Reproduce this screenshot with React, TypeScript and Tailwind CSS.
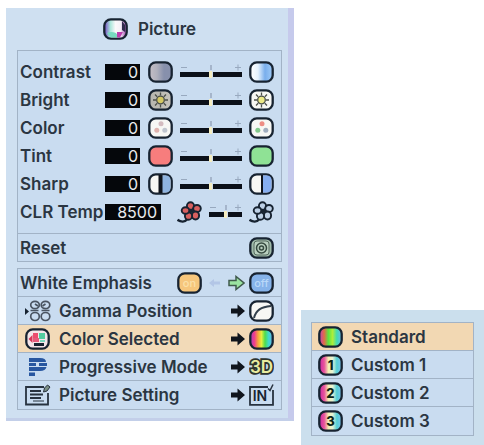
import { useState } from "react";
import type { ReactNode } from "react";

const INK = "#172331";

const rainbow = ["#b93bb4", "#f0408c", "#f6a33e", "#e4ee3e", "#4fdc4c", "#3fd9c8", "#62b8ec"];

// Rounded screen outline shared by most of the icons
const Screen = ({
  id,
  stops = ["#f7f7f4"],
  children,
}: {
  id: string;
  stops?: string[];
  children?: ReactNode;
}) => (
  <svg viewBox="0 0 25 22" className="h-[22px] w-[25px] shrink-0" aria-hidden="true">
    <defs>
      <linearGradient id={id} gradientUnits="userSpaceOnUse" x1="2" x2="23" y1="0" y2="0">
        {stops.map((color, index) => (
          <stop
            key={index}
            offset={stops.length > 1 ? index / (stops.length - 1) : 0}
            stopColor={color}
          />
        ))}
      </linearGradient>
    </defs>
    <rect
      x="1.3"
      y="1.3"
      width="22.4"
      height="19.4"
      rx="6.5"
      fill={`url(#${id})`}
      stroke={INK}
      strokeWidth="2.3"
    />
    {children}
  </svg>
);

const Sun = ({ color }: { color: string }) => (
  <g stroke="#4c5049" strokeWidth="1.3">
    <path d="M12.5 3.5v3M12.5 15.5v3M5 11h3M17 11h3M7 5.5l2.2 2.2M15.8 14.3l2.2 2.2M18 5.5l-2.2 2.2M9.2 14.3L7 16.5" />
    <circle cx="12.5" cy="11" r="3.8" fill={color} />
  </g>
);

const Dots = ({ colors }: { colors: string[] }) => (
  <g>
    <circle cx="13" cy="6.8" r="2.5" fill={colors[0]} />
    <circle cx="8.8" cy="13.2" r="2.5" fill={colors[1]} />
    <circle cx="16.8" cy="13.2" r="2.5" fill={colors[2]} />
  </g>
);

const Flower = ({ color }: { color: string }) => (
  <svg viewBox="0 0 25 22" className="h-[22px] w-[25px] shrink-0" aria-hidden="true">
    <g stroke={INK} strokeWidth="1.9" fill={color}>
      <ellipse cx="13.500" cy="5" rx="3.600" ry="3.800" />
      <ellipse cx="20" cy="7.500" rx="3.800" ry="3.500" />
      <ellipse cx="18.500" cy="14.500" rx="3.600" ry="4" />
      <ellipse cx="11.500" cy="15" rx="3.600" ry="3.800" />
      <ellipse cx="8.500" cy="9.500" rx="3.800" ry="3.300" />
      <path d="M10 18.500c-2 2.500-6 2.700-9.500.3" fill="none" strokeWidth="2.400" />
    </g>
    <circle cx="14.500" cy="10.300" r="1.800" fill={INK} />
  </svg>
);

const BlackArrow = () => (
  <svg viewBox="0 0 14 14" className="h-3.5 w-3.5 shrink-0" aria-hidden="true">
    <path d="M0 4.500h6.500V.5L14 7l-7.500 6.500V9.500H0z" fill="#10151d" />
  </svg>
);

const adjustments = [
  {
    label: "Contrast",
    low: <Screen id="contrast-low" stops={["#c3bdc5", "#b0b0bc", "#8790ac", "#8790ac"]} />,
    high: <Screen id="contrast-high" stops={["#ffffff", "#e6f2fd", "#79aeec", "#9cc8f6"]} />,
  },
  {
    label: "Bright",
    low: (
      <Screen id="bright-low" stops={["#b5b5ae", "#c5c2ba"]}>
        <Sun color="#d3c763" />
      </Screen>
    ),
    high: (
      <Screen id="bright-high">
        <Sun color="#ece986" />
      </Screen>
    ),
  },
  {
    label: "Color",
    low: (
      <Screen id="color-low">
        <Dots colors={["#d4bcc0", "#dfb3ae", "#c0c6cf"]} />
      </Screen>
    ),
    high: (
      <Screen id="color-high">
        <Dots colors={["#ee8d84", "#82c98b", "#a1aebf"]} />
      </Screen>
    ),
  },
  {
    label: "Tint",
    low: <Screen id="tint-low" stops={["#f77d7d"]} />,
    high: <Screen id="tint-high" stops={["#8fe295"]} />,
  },
  {
    label: "Sharp",
    low: (
      <Screen id="sharp-low">
        <path d="M14 2.400h3.500q5 0 5 5v7.200q0 5-5 5H14z" fill="#8fb4e0" />
        <path d="M10.500 2h4v18h-4z" fill="#0e131b" />
      </Screen>
    ),
    high: (
      <Screen id="sharp-high">
        <path d="M13 2.400h4.500q5 0 5 5v7.200q0 5-5 5H13z" fill="#86aef0" />
        <path d="M12 2h2v18h-2z" fill="#0e131b" />
      </Screen>
    ),
  },
];

const Ticks = () => (
  <div className="flex h-2 items-center justify-between text-[#98a9bf]">
    <svg viewBox="0 0 7 8" className="h-2 w-[7px]" aria-hidden="true">
      <path d="M1 3.500h6" stroke="currentColor" />
    </svg>
    <svg viewBox="0 0 2 8" className="h-2 w-0.5" aria-hidden="true">
      <path d="M1 1v5" stroke="currentColor" strokeWidth="1.500" />
    </svg>
    <svg viewBox="0 0 7 8" className="h-2 w-[7px]" aria-hidden="true">
      <path d="M0 3.500h6M3 .5v6" stroke="currentColor" />
    </svg>
  </div>
);

type AdjustRowProps = {
  label: string;
  min: number;
  max: number;
  initial: number;
  wide?: boolean;
  low: ReactNode;
  high: ReactNode;
};

const AdjustRow = ({ label, min, max, initial, wide, low, high }: AdjustRowProps) => {
  const [value, setValue] = useState(initial);
  const id = label.toLowerCase().replace(" ", "-");

  return (
    <div className="flex h-7 items-center pr-[7px] pl-0.5">
      <label htmlFor={id} className="w-[85px] shrink-0 whitespace-nowrap">
        {label}
      </label>
      <output
        htmlFor={id}
        className={
          wide
            ? "h-4 w-14 shrink-0 bg-[#05070b] pr-1 text-right text-base leading-4 font-normal text-[#e9ebee]"
            : "h-4 w-[35px] shrink-0 bg-[#05070b] pr-0.5 text-right text-base leading-4 font-normal text-[#e9ebee]"
        }
      >
        {value}
      </output>
      <div className={wide ? "ml-4 flex flex-1 items-center" : "ml-2 flex flex-1 items-center"}>
        {low}
        <div className="mx-[7px] flex min-w-0 flex-1 flex-col pb-1">
          <Ticks />
          <input
            id={id}
            type="range"
            min={min}
            max={max}
            value={value}
            onChange={(e) => setValue(Number(e.target.value))}
            className="block h-[5px] w-full appearance-none bg-[#0b1019] [&::-webkit-slider-thumb]:h-[7px] [&::-webkit-slider-thumb]:w-1 [&::-webkit-slider-thumb]:appearance-none [&::-webkit-slider-thumb]:border-r [&::-webkit-slider-thumb]:border-[#cfdcec] [&::-webkit-slider-thumb]:bg-[#f4ecc0]"
          />
        </div>
        {high}
      </div>
    </div>
  );
};

const menuItems = [
  {
    title: "Gamma Position",
    icon: (
      <svg viewBox="0 0 26 22" className="h-[22px] w-[26px] shrink-0" aria-hidden="true">
        <path d="M0 8l4 3.500L0 15z" fill={INK} />
        <g fill="none" stroke="#4a5461" strokeWidth="1.700">
          <ellipse cx="10" cy="5" rx="4.300" ry="3.600" />
          <ellipse cx="20.500" cy="5" rx="4.300" ry="3.600" />
          <ellipse cx="10" cy="16.500" rx="4.300" ry="4" />
          <ellipse cx="20.500" cy="16.500" rx="4.300" ry="4" />
          <path d="M5.500 10.500h8M16.500 10.500h8M10 4l3 2M20.500 4l-3 2" />
        </g>
      </svg>
    ),
    target: (
      <Screen id="gamma">
        <path d="M5 18C7 10 12 7 22 6" fill="none" stroke="#33404c" strokeWidth="2" />
      </Screen>
    ),
  },
  {
    title: "Color Selected",
    icon: (
      <Screen id="selected" stops={["#f4e5e9"]}>
        <path d="M3.500 11l4-4v8z" fill="#d83558" />
        <path d="M8 5h5v5H8z" fill="#ec4c6e" />
        <path d="M14 5h6v6h-6z" fill="#54cba0" />
        <path d="M8 10h6v4H8z" fill="#e75a7c" />
        <path d="M9 15h10v3H9z" fill="#172331" />
        <path d="M15 12h5v2h-5z" fill="#78d8bd" />
      </Screen>
    ),
    target: <Screen id="selected-target" stops={rainbow} />,
  },
  {
    title: "Progressive Mode",
    icon: (
      <svg viewBox="0 0 26 22" className="h-[22px] w-[26px] shrink-0" aria-hidden="true">
        <path
          d="M4 2h11q6 0 6 4H4zM4 7h7v3H4zM14 7h8v3h-8zM4 11h17.500q-1 4-6.500 4H4zM4 16.500h6V20H4z"
          fill="#2857a0"
        />
      </svg>
    ),
    target: (
      <svg viewBox="0 0 25 22" className="h-[22px] w-[25px] shrink-0" aria-hidden="true">
        <text
          x="12.500"
          y="17"
          textAnchor="middle"
          fontSize="17"
          fontWeight="600"
          fill="#e9eca0"
          stroke="#2d3430"
          strokeWidth="3.500"
          paintOrder="stroke"
        >
          3D
        </text>
      </svg>
    ),
  },
  {
    title: "Picture Setting",
    icon: (
      <svg viewBox="0 0 26 22" className="h-[22px] w-[26px] shrink-0" aria-hidden="true">
        <path d="M19 3H1v17.500h22V9" fill="none" stroke="#27323f" strokeWidth="1.800" />
        <path d="M5 7h11M5 10.500h13M5 14h11" stroke="#27323f" strokeWidth="1.900" />
        <path d="M8 17h11" stroke="#27323f" />
        <path d="M18.500 8l1-4 3-3 2.500 2-3 4z" fill="#7b8f84" stroke="#27323f" />
      </svg>
    ),
    target: (
      <svg viewBox="0 0 25 22" className="h-[22px] w-[25px] shrink-0" aria-hidden="true">
        <path d="M19 3H1v17.800h23V6" fill="none" stroke="#27323f" strokeWidth="1.800" />
        <text x="11" y="17" textAnchor="middle" fontSize="14" fontWeight="600" fill={INK}>
          IN
        </text>
        <path d="M19 4.500l2 2 3-6" fill="none" stroke="#27323f" strokeWidth="1.500" />
      </svg>
    ),
  },
];

const presets = ["Standard", "Custom 1", "Custom 2", "Custom 3"];

const PresetIcon = ({ index }: { index: number }) =>
  index === 0 ? (
    <Screen id="preset-0" stops={["#c548a4", "#e36a48", "#58e540", "#b0ed3a", "#40dcb0", "#66bde4"]} />
  ) : (
    <Screen
      id={`preset-${index}`}
      stops={["#cf2da2", "#e8539b", "#f5f0b2", "#e7f4d6", "#54cfd5", "#79c4ea"]}
    >
      <text x="12.500" y="15.500" textAnchor="middle" fontSize="13" fontWeight="800" fill="#0c2416">
        {index}
      </text>
    </Screen>
  );

const App = () => {
  const [selected, setSelected] = useState("Color Selected");
  const [preset, setPreset] = useState("Standard");
  const [emphasis, setEmphasis] = useState(false);

  return (
    <main className="grid min-w-0 grid-cols-[288fr_183fr] items-end gap-[7px] bg-white pt-2 pl-1.5 font-['Inter','Liberation_Sans',sans-serif] text-[17px] leading-5 font-semibold text-[#2b3642]">
      <section className="mb-[25px] border-r-[6px] border-b-[3px] border-r-[#c6caec] border-b-[#c3cfe9] bg-[#cfe0f1] pr-1.5 pb-2 pl-[11px]">
        <header className="flex h-[42px] items-center justify-center gap-2.5">
          <Screen id="title" stops={["#7b55c6", "#a9e6da", "#fbf9fb", "#f3f1f7", "#a04aac"]}>
            <path d="M4 15q4-2 9 0l3 4.500H8z" fill="#78dbc0" />
            <path d="M14 14h6l-3 5.500h-3z" fill="#bd3fae" />
            <path d="M19 3l3 4v7l-3-2z" fill="#302b4c" />
          </Screen>
          <h1>Picture</h1>
        </header>

        <div className="border border-[#a2b3c6] bg-[#c9dcf0]">
          <div className="py-[7px]">
            {adjustments.map((item) => (
              <AdjustRow key={item.label} min={-32} max={32} initial={0} {...item} />
            ))}
            <AdjustRow
              label="CLR Temp"
              min={7000}
              max={10000}
              initial={8500}
              wide
              low={<Flower color="#d8605f" />}
              high={<Flower color="#bdd0e6" />}
            />
          </div>
          <button
            type="button"
            className="flex h-7 w-full items-center justify-between border-t border-[#a2b3c6] pr-[7px] pl-0.5"
          >
            Reset
            <Screen id="reset" stops={["#9fbaa9"]}>
              <rect x="5" y="4" width="15" height="14" rx="3" fill="#b9d0bf" stroke="#566b60" />
              <circle cx="12.500" cy="11" r="5" fill="none" stroke="#35493f" strokeWidth="1.500" />
              <circle cx="12.500" cy="11" r="2" fill="none" stroke="#35493f" strokeWidth="1.500" />
            </Screen>
          </button>
        </div>

        <div className="mt-1.5 divide-y divide-[#a2b3c6] border border-[#a2b3c6] bg-[#c9dcf0]">
          <button
            type="button"
            role="switch"
            aria-checked={emphasis}
            onClick={() => setEmphasis(!emphasis)}
            className="flex h-7 w-full items-center pr-[7px] pl-0.5 text-left"
          >
            <span className="flex-1 whitespace-nowrap">White Emphasis</span>
            <Screen id="on" stops={["#f6c67c"]}>
              <text x="12.500" y="15" textAnchor="middle" fontSize="11" fontWeight="500" fill="#fbe0a8">
                on
              </text>
            </Screen>
            <svg viewBox="0 0 14 12" className="ml-1.5 h-3 w-3.5 shrink-0" aria-hidden="true">
              <path d="M1 6l5-4v2.500h6v3H6V10z" fill="#b3c6e6" />
            </svg>
            <svg viewBox="0 0 17 16" className="mr-1 ml-1.5 h-4 w-[17px] shrink-0" aria-hidden="true">
              <path
                d="M1 5.500h7V1.500L16 8l-8 6.500v-4H1z"
                fill="#9be3a1"
                stroke="#405a4c"
                strokeWidth="1.500"
              />
            </svg>
            <Screen id="off" stops={["#86b3ea"]}>
              <text x="12.500" y="15" textAnchor="middle" fontSize="11" fontWeight="500" fill="#b9d8f8">
                off
              </text>
            </Screen>
          </button>
          {menuItems.map(({ title, icon, target }) => (
            <button
              key={title}
              type="button"
              onClick={() => setSelected(title)}
              className={
                selected === title
                  ? "flex h-7 w-full items-center bg-[#f2dab8] pr-[7px] pl-[7px] text-left"
                  : "flex h-7 w-full items-center pr-[7px] pl-[7px] text-left"
              }
            >
              <span className="flex w-[34px] shrink-0">{icon}</span>
              <span className="flex-1 whitespace-nowrap">{title}</span>
              <BlackArrow />
              <span className="ml-1 flex">{target}</span>
            </button>
          ))}
        </div>
      </section>

      <section className="bg-[#cbdfed] px-2.5 pt-3 pb-2.5" aria-label="Color Selected">
        <div className="divide-y divide-[#a2b3c6] border border-[#a2b3c6] bg-[#c9dcf0]">
          {presets.map((name, index) => (
            <button
              key={name}
              type="button"
              onClick={() => setPreset(name)}
              className={
                preset === name
                  ? "flex h-7 w-full items-center gap-2 bg-[#f2d8b3] px-1.5 text-left"
                  : "flex h-7 w-full items-center gap-2 px-1.5 text-left"
              }
            >
              <PresetIcon index={index} />
              <span className="whitespace-nowrap">{name}</span>
            </button>
          ))}
        </div>
      </section>
    </main>
  );
};

export default App;
